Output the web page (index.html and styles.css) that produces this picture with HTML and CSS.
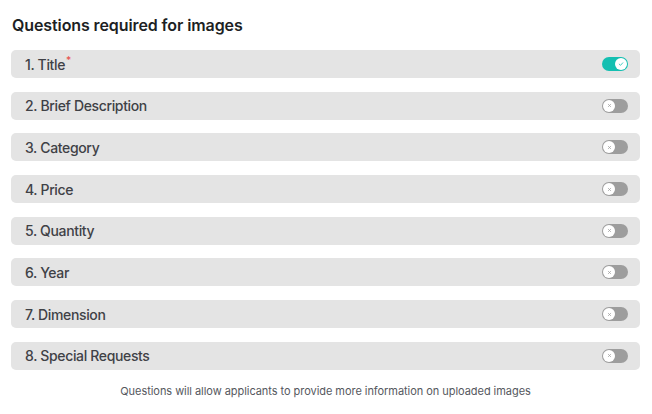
FILE: index.html
```html
<!DOCTYPE html>
<html>
<head>
<meta charset="utf-8">
<link rel="stylesheet" href="styles.css">
</head>
<body>
<div class="panel">
  <h2 class="heading">Questions required for images</h2>
  <div class="list">
    <div class="row"><span class="label">1. Title<sup class="req">*</sup></span><span class="toggle on"><span class="knob"><svg viewBox="0 0 10 10" width="6" height="6"><path d="M2 5.2 L4.2 7.2 L8 3" fill="none" stroke="#14bfb1" stroke-width="1.3" stroke-linecap="round" stroke-linejoin="round"/></svg></span></span></div>
    <div class="row"><span class="label">2. Brief Description</span><span class="toggle"><span class="knob"><svg viewBox="0 0 10 10" width="5" height="5"><path d="M2.5 2.5 L7.5 7.5 M7.5 2.5 L2.5 7.5" stroke="#999" stroke-width="1.3" stroke-linecap="round"/></svg></span></span></div>
    <div class="row"><span class="label">3. Category</span><span class="toggle"><span class="knob"><svg viewBox="0 0 10 10" width="5" height="5"><path d="M2.5 2.5 L7.5 7.5 M7.5 2.5 L2.5 7.5" stroke="#999" stroke-width="1.3" stroke-linecap="round"/></svg></span></span></div>
    <div class="row"><span class="label">4. Price</span><span class="toggle"><span class="knob"><svg viewBox="0 0 10 10" width="5" height="5"><path d="M2.5 2.5 L7.5 7.5 M7.5 2.5 L2.5 7.5" stroke="#999" stroke-width="1.3" stroke-linecap="round"/></svg></span></span></div>
    <div class="row"><span class="label">5. Quantity</span><span class="toggle"><span class="knob"><svg viewBox="0 0 10 10" width="5" height="5"><path d="M2.5 2.5 L7.5 7.5 M7.5 2.5 L2.5 7.5" stroke="#999" stroke-width="1.3" stroke-linecap="round"/></svg></span></span></div>
    <div class="row"><span class="label">6. Year</span><span class="toggle"><span class="knob"><svg viewBox="0 0 10 10" width="5" height="5"><path d="M2.5 2.5 L7.5 7.5 M7.5 2.5 L2.5 7.5" stroke="#999" stroke-width="1.3" stroke-linecap="round"/></svg></span></span></div>
    <div class="row"><span class="label">7. Dimension</span><span class="toggle"><span class="knob"><svg viewBox="0 0 10 10" width="5" height="5"><path d="M2.5 2.5 L7.5 7.5 M7.5 2.5 L2.5 7.5" stroke="#999" stroke-width="1.3" stroke-linecap="round"/></svg></span></span></div>
    <div class="row"><span class="label">8. Special Requests</span><span class="toggle"><span class="knob"><svg viewBox="0 0 10 10" width="5" height="5"><path d="M2.5 2.5 L7.5 7.5 M7.5 2.5 L2.5 7.5" stroke="#999" stroke-width="1.3" stroke-linecap="round"/></svg></span></span></div>
  </div>
  <p class="note">Questions will allow applicants to provide more information on uploaded images</p>
</div>
</body>
</html>
```
FILE: styles.css
```css
html, body {
  margin: 0;
  padding: 0;
  background: #ffffff;
}
body {
  font-family: Inter, "Open Sans", sans-serif;
}
.panel {
  padding: 13px 12px 0 11px;
}
.heading {
  margin: 0 0 0 1px;
  font-size: 16px;
  font-weight: 600;
  line-height: 24px;
  color: #1d1f24;
  letter-spacing: -0.1px;
}
.list {
  display: flex;
  flex-direction: column;
  gap: 13.7px;
  margin-top: 13px;
}
.row {
  height: 28px;
  background: #e4e4e4;
  border-radius: 5px;
  display: flex;
  align-items: center;
  justify-content: space-between;
  padding: 0 12px 0 14px;
}
.label {
  font-size: 14px;
  font-weight: 500;
  color: #3f4146;
  letter-spacing: -0.35px;
}
.req {
  color: #e8534f;
  font-size: 10px;
  vertical-align: 6px;
  line-height: 0;
  margin-left: 1px;
}
.toggle {
  width: 26px;
  height: 14px;
  border-radius: 7px;
  background: #9d9d9d;
  display: flex;
  align-items: center;
  padding: 0 1px;
  box-sizing: border-box;
}
.toggle.on {
  background: #14bfb1;
  justify-content: flex-end;
}
.knob {
  width: 12px;
  height: 12px;
  border-radius: 50%;
  background: #ffffff;
  display: flex;
  align-items: center;
  justify-content: center;
}
.note {
  margin: 14px 0 0;
  text-align: center;
  font-size: 11px;
  color: #55585e;
  letter-spacing: -0.05px;
}
```
